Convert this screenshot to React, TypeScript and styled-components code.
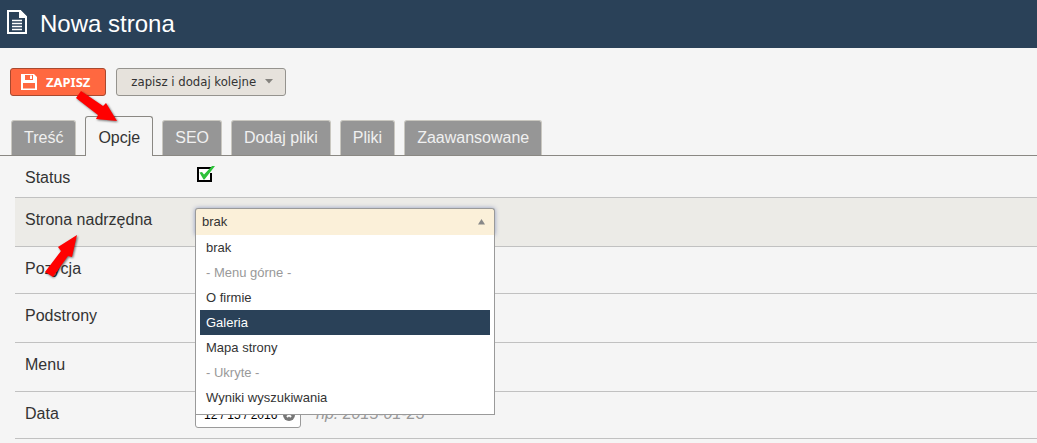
import React, { useState } from "react";
import styled, { createGlobalStyle } from "styled-components";

const GlobalStyle = createGlobalStyle`
  *, *::before, *::after { box-sizing: border-box; }
  body {
    margin: 0;
    background: #f5f5f5;
    color: #333;
    font-family: "Liberation Sans", Arial, sans-serif;
    font-size: 16px;
    line-height: 20px;
    overflow-x: hidden;
  }
`;

const Page = styled.div`
  position: relative;
`;

const Header = styled.header`
  display: flex;
  align-items: flex-start;
  gap: 13px;
  height: 48px;
  padding: 10px 7px;
  background: #2a4158;
  color: #fff;
`;

const Title = styled.h1`
  margin: 0;
  font-size: 24px;
  line-height: 28px;
  font-weight: 400;
`;

const Toolbar = styled.div`
  display: flex;
  gap: 10px;
  padding: 20px 10px;
`;

const ToolButton = styled.button<{ $primary?: boolean }>`
  display: flex;
  align-items: center;
  gap: 9px;
  height: 28px;
  padding: ${(p) => (p.$primary ? "0 15px 0 10px" : "0 12px 0 14px")};
  border: 1px solid ${(p) => (p.$primary ? "#a8492f" : "#95938e")};
  border-radius: 3px;
  background: ${(p) => (p.$primary ? "#ff6840" : "#e6e2dc")};
  color: ${(p) => (p.$primary ? "#fff" : "#333")};
  font-family: ${(p) =>
    p.$primary ? '"Noto Sans", Tahoma, sans-serif' : '"DejaVu Sans Condensed", Tahoma, sans-serif'};
  font-size: 13px;
  line-height: 16px;
  font-weight: ${(p) => (p.$primary ? 700 : 400)};
  white-space: nowrap;
`;

const Tabs = styled.nav`
  display: flex;
  align-items: flex-end;
  gap: 9px;
  height: 40px;
  padding: 0 11px;
  border-bottom: 1px solid #8a8883;
`;

const Tab = styled.a<{ $active?: boolean }>`
  height: ${(p) => (p.$active ? "40px" : "35px")};
  margin-bottom: ${(p) => (p.$active ? "-1px" : "0")};
  padding: ${(p) => (p.$active ? "11px 12px 0" : "7px 12px 0")};
  border: 1px solid ${(p) => (p.$active ? "#8a8883" : "#c9c7c0")};
  border-bottom: 0;
  border-radius: 3px 3px 0 0;
  background: ${(p) => (p.$active ? "#f5f5f5" : "#969696")};
  color: ${(p) => (p.$active ? "#333" : "#f0f0f0")};
  text-decoration: none;
  white-space: nowrap;
`;

const Form = styled.form`
  padding-left: 15px;
`;

const Row = styled.div<{ $size?: "small" | "medium" | "large"; $current?: boolean }>`
  display: flex;
  align-items: flex-start;
  min-height: ${(p) => (p.$size === "small" ? "42px" : p.$size === "large" ? "49px" : "47px")};
  padding: 10px 10px 0;
  border-bottom: 1px solid #c1c1c1;
  background: ${(p) => (p.$current ? "#ecebe7" : "transparent")};
`;

const Label = styled.label`
  flex: 0 0 170px;
  line-height: 24px;
`;

const CheckWrap = styled.span`
  display: grid;
  width: 20px;
  height: 18px;
  & > * {
    grid-area: 1 / 1;
  }
  svg {
    pointer-events: none;
  }
`;

const Checkbox = styled.input`
  appearance: none;
  width: 20px;
  height: 18px;
  margin: 0;
  &:not(:checked) + svg .tick {
    display: none;
  }
`;

const Picker = styled.div`
  position: relative;
  width: 300px;
`;

const SelectFrame = styled.div`
  display: grid;
  align-items: center;
  border: 1px solid #9a9a9a;
  border-bottom: 0;
  border-radius: 3px 3px 0 0;
  background: #fbf0d9;
  box-shadow: 0 0 4px rgba(70, 90, 160, 0.55);
  & > * {
    grid-area: 1 / 1;
  }
  svg {
    justify-self: end;
    margin-right: 9px;
    pointer-events: none;
  }
`;

const Select = styled.select`
  appearance: none;
  width: 100%;
  height: 26px;
  padding: 0 6px;
  border: 0;
  outline: 0;
  background: transparent;
  color: #333;
  font: 13px/18px "Liberation Sans", Arial, sans-serif;
`;

const Menu = styled.ul`
  position: absolute;
  z-index: 2;
  top: 100%;
  left: 0;
  right: 0;
  margin: 0;
  padding: 0 4px 4px;
  border: 1px solid #9a9a9a;
  border-top: 0;
  background: #fff;
  list-style: none;
  font-size: 13px;
`;

const Option = styled.li<{ $group?: boolean; $highlighted?: boolean }>`
  height: 25px;
  padding: 0 6px;
  line-height: 25px;
  color: ${(p) => (p.$highlighted ? "#fff" : p.$group ? "#999" : "#333")};
  background: ${(p) => (p.$highlighted ? "#2a4158" : "transparent")};
  cursor: default;
`;

const DateField = styled.div`
  display: flex;
  align-items: center;
  width: 106px;
  height: 26px;
  padding: 0 5px 0 8px;
  border: 1px solid #9a9a9a;
  border-radius: 3px;
  background: #fff;
`;

const DateInput = styled.input`
  flex: 1;
  min-width: 0;
  padding: 0;
  border: 0;
  outline: 0;
  background: transparent;
  color: #000;
  font: 12px/18px "Liberation Sans", Arial, sans-serif;
`;

const ClearButton = styled.button`
  display: flex;
  padding: 0;
  border: 0;
  background: none;
`;

const Hint = styled.em`
  margin-left: 15px;
  line-height: 24px;
  color: #999;
`;

const Pointer = styled.svg<{ $x: number; $y: number }>`
  position: absolute;
  z-index: 3;
  left: ${(p) => p.$x}px;
  top: ${(p) => p.$y}px;
  overflow: visible;
  pointer-events: none;
  filter: drop-shadow(1px 1px 1px rgba(0, 0, 0, 0.55));
`;

const tabs = ["Treść", "Opcje", "SEO", "Dodaj pliki", "Pliki", "Zaawansowane"];

const pages = [
  { name: "brak" },
  { name: "- Menu górne -", group: true },
  { name: "O firmie" },
  { name: "Galeria" },
  { name: "Mapa strony" },
  { name: "- Ukryte -", group: true },
  { name: "Wyniki wyszukiwania" },
];

const DocumentIcon = () => (
  <svg width="20" height="24" viewBox="0 0 20 24" fill="none" aria-hidden="true">
    <path d="M1 1H13L19 7V23H1Z" stroke="#fff" strokeWidth="2" />
    <path d="M12 0H13.500L20 6.500V8H12Z" fill="#fff" />
    <path d="M5 10.500H15M5 13.500H15M5 16.500H15M5 19.500H15" stroke="#fff" strokeWidth="1.300" />
  </svg>
);

const SaveIcon = () => (
  <svg width="16" height="16" viewBox="0 0 16 16" aria-hidden="true">
    <path
      fill="#fff"
      fillRule="evenodd"
      d="M0 0H13L16 3V16H0ZM4 1V6H12V1ZM2 9V14.500H14V9Z"
    />
    <path fill="#fff" d="M9 1.500H11V5H9Z" />
  </svg>
);

export default function App() {
  const [parent, setParent] = useState("brak");
  const [open, setOpen] = useState(true);
  const [highlighted, setHighlighted] = useState("Galeria");
  const [date, setDate] = useState("12 / 15 / 2016");

  return (
    <Page>
      <GlobalStyle />
      <Header>
        <DocumentIcon />
        <Title>Nowa strona</Title>
      </Header>
      <Toolbar>
        <ToolButton type="button" $primary>
          <SaveIcon />
          ZAPISZ
        </ToolButton>
        <ToolButton type="button">
          zapisz i dodaj kolejne
          <svg width="8" height="7" viewBox="0 0 8 7" aria-hidden="true">
            <path d="M0 0H8L4 4.500Z" fill="#85837e" />
          </svg>
        </ToolButton>
      </Toolbar>
      <Tabs>
        {tabs.map((name) => (
          <Tab key={name} href="#" $active={name === "Opcje"}>
            {name}
          </Tab>
        ))}
      </Tabs>
      <Form>
        <Row $size="small">
          <Label htmlFor="status">Status</Label>
          <CheckWrap>
            <Checkbox id="status" type="checkbox" defaultChecked />
            <svg width="20" height="18" viewBox="0 0 20 18" aria-hidden="true">
              <rect x="3" y="2" width="13" height="13" fill="#fff" stroke="#000" strokeWidth="2" />
              <path d="M15 4L18 1V7H15Z" fill="#f5f5f5" />
              <path className="tick" d="M4.500 6.500L7 6L9 8.500L17 0L20 0L9.500 13.500L8.500 13.500Z" fill="#2dc13a" />
            </svg>
          </CheckWrap>
        </Row>
        <Row $size="large" $current>
          <Label htmlFor="parent">Strona nadrzędna</Label>
          <Picker>
            <SelectFrame>
              <Select
                id="parent"
                value={parent}
                onChange={(e) => setParent(e.target.value)}
                onMouseDown={(e) => {
                  e.preventDefault();
                  setOpen(!open);
                }}
              >
                {pages.map((p) => (
                  <option key={p.name} disabled={p.group}>
                    {p.name}
                  </option>
                ))}
              </Select>
              <svg width="7" height="6" viewBox="0 0 7 6" aria-hidden="true">
                <path d="M3.500 0L7 5.500H0Z" fill="#888" />
              </svg>
            </SelectFrame>
            {open && (
              <Menu role="listbox" aria-label="Strona nadrzędna">
                {pages.map((p) => (
                  <Option
                    key={p.name}
                    role="option"
                    aria-selected={p.name === parent}
                    aria-disabled={p.group}
                    $group={p.group}
                    $highlighted={p.name === highlighted}
                    onMouseEnter={() => !p.group && setHighlighted(p.name)}
                    onClick={() => {
                      if (p.group) return;
                      setParent(p.name);
                      setOpen(false);
                    }}
                  >
                    {p.name}
                  </Option>
                ))}
              </Menu>
            )}
          </Picker>
        </Row>
        <Row>
          <Label as="span">Pozycja</Label>
        </Row>
        <Row $size="large">
          <Label as="span">Podstrony</Label>
        </Row>
        <Row $size="large">
          <Label as="span">Menu</Label>
        </Row>
        <Row>
          <Label htmlFor="date">Data</Label>
          <DateField>
            <DateInput id="date" value={date} onChange={(e) => setDate(e.target.value)} />
            <ClearButton type="button" aria-label="Wyczyść datę" onClick={() => setDate("")}>
              <svg width="12" height="12" viewBox="0 0 12 12" aria-hidden="true">
                <circle cx="6" cy="6" r="6" fill="#777" />
                <path d="M4 4L8 8M8 4L4 8" stroke="#fff" strokeWidth="2" />
              </svg>
            </ClearButton>
          </DateField>
          <Hint>np. 2015-01-23</Hint>
        </Row>
      </Form>
      <Pointer $x={76} $y={91} width="42" height="32" viewBox="0 0 42 32" aria-hidden="true">
        <path d="M5 0L27 15L30 12L41 30L20 28L22 24L0 7Z" fill="#f00" />
      </Pointer>
      <Pointer $x={46} $y={235} width="32" height="43" viewBox="0 0 32 43" aria-hidden="true">
        <path d="M31 0L12 12L15 16L-1 37L7 42L22 21L26 22Z" fill="#f00" />
      </Pointer>
    </Page>
  );
}
